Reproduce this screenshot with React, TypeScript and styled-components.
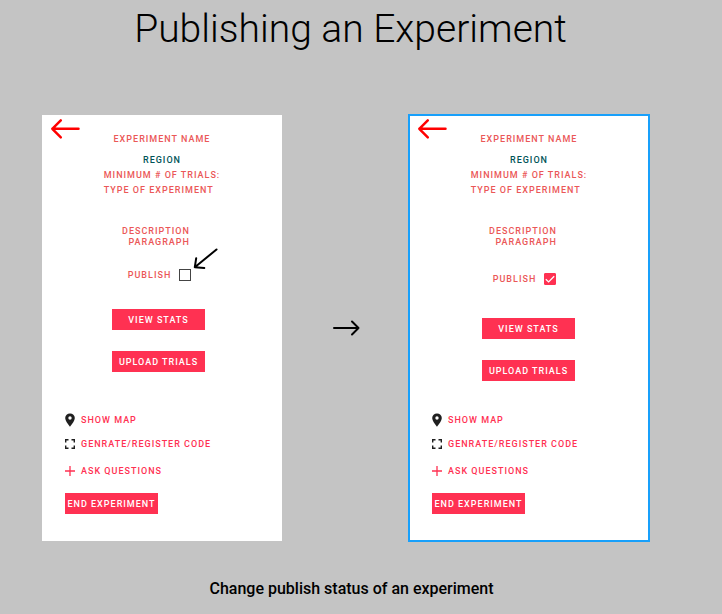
import { useState } from "react";
import type { ReactNode } from "react";
import styled, { createGlobalStyle } from "styled-components";

const color = {
  page: "#c4c4c4",
  primary: "#ff3152",
  coral: "#eb5757",
  teal: "#005457",
  back: "#ff0000",
  select: "#18a0fb",
};

const GlobalStyle = createGlobalStyle`
  * { box-sizing: border-box; }
  body {
    margin: 0;
    background: ${color.page};
    color: #000;
    font-family: Roboto, "Liberation Sans", sans-serif;
  }
`;

const Page = styled.main`
  display: flex;
  flex-direction: column;
  min-height: 100vh;
`;

const Title = styled.h1`
  margin: 0;
  padding-top: 6px;
  padding-right: 21px;
  text-align: center;
  font-size: 39px;
  font-weight: 300;
  line-height: 47px;
`;

const Flow = styled.section`
  display: grid;
  grid-template-columns: 1fr 127px 1fr;
  padding: 62px 73px 0 42px;
`;

const Between = styled.div`
  display: grid;
  place-items: center;
  padding-left: 1px;
`;

const Caption = styled.p`
  margin: 0;
  padding-top: 38px;
  padding-right: 19px;
  text-align: center;
  font-size: 16px;
  font-weight: 500;
  line-height: 19px;
`;

const Screen = styled.article<{ $selected: boolean }>`
  display: flex;
  flex-direction: column;
  min-height: 426px;
  padding: 3px 0 27px;
  background: #fff;
  box-shadow: ${(p) =>
    p.$selected ? `0 0 0 1px ${color.select}, inset 0 0 0 1px ${color.select}` : "none"};
  font-size: 9px;
  font-weight: 500;
  line-height: 11px;
  letter-spacing: 1px;
  text-transform: uppercase;
`;

const Header = styled.header`
  display: grid;
  grid-template-columns: 30px 1fr 30px;
  padding: 0 8px;
`;

const BackButton = styled.button`
  display: block;
  height: 22px;
  padding: 0;
  border: 0;
  background: none;
  cursor: pointer;
`;

const Name = styled.h2`
  margin: 0;
  padding-top: 16px;
  color: ${color.coral};
  font-size: inherit;
  font-weight: 500;
  text-align: center;
`;

const Details = styled.div`
  align-self: center;
  padding-top: 8px;
  color: ${color.coral};
  line-height: 15px;
`;

const Region = styled.p`
  margin: 0;
  color: ${color.teal};
  text-align: center;
`;

const Detail = styled.p`
  margin: 0;
`;

const Description = styled.p`
  align-self: center;
  margin: 28px 12px 0 0;
  color: ${color.coral};
  text-align: right;
`;

const PublishRow = styled.label<{ $checked: boolean }>`
  display: flex;
  align-self: center;
  align-items: center;
  gap: 8px;
  margin-top: ${(p) => (p.$checked ? 25 : 21)}px;
  margin-right: ${(p) => (p.$checked ? 9 : 5)}px;
  color: ${color.coral};
`;

const BoxCell = styled.span`
  position: relative;
  display: grid;
`;

const Box = styled.input`
  grid-area: 1 / 1;
  appearance: none;
  width: 12px;
  height: 12px;
  margin: 0;
  border: 1px solid #444;
  background: #fff;
  cursor: pointer;
  &:checked {
    border-color: ${color.primary};
    border-radius: 1px;
    background: ${color.primary};
  }
`;

const Tick = styled.svg`
  grid-area: 1 / 1;
  pointer-events: none;
`;

const Pointer = styled.svg`
  position: absolute;
  left: 14px;
  bottom: 12px;
  pointer-events: none;
`;

const Button = styled.button`
  width: 93px;
  height: 21px;
  padding: 1px 0 0;
  border: 0;
  background: ${color.primary};
  color: #fff;
  font: inherit;
  letter-spacing: inherit;
  text-transform: inherit;
  white-space: nowrap;
  cursor: pointer;
`;

const Actions = styled.div<{ $checked: boolean }>`
  display: grid;
  gap: 21px;
  align-self: center;
  margin-top: ${(p) => (p.$checked ? 33 : 28)}px;
  margin-right: ${(p) => (p.$checked ? 1 : 7)}px;
`;

const Footer = styled.div`
  display: flex;
  flex-direction: column;
  align-items: flex-start;
  margin-top: auto;
  padding-left: 23px;
`;

const Menu = styled.ul`
  display: grid;
  gap: 10px;
  margin: 0 0 15px;
  padding: 0;
  list-style: none;
`;

const MenuItem = styled.li<{ $apart?: boolean }>`
  margin-top: ${(p) => (p.$apart ? 3 : 0)}px;
`;

const MenuLink = styled.a`
  display: flex;
  align-items: center;
  gap: 6px;
  height: 14px;
  color: ${color.primary};
  text-decoration: none;
`;

function PinIcon() {
  return (
    <svg width="10" height="14" viewBox="1 0 10 14" aria-hidden="true">
      <path
        fill="#1f1f1f"
        fillRule="evenodd"
        d="M6 .4A4.700 4.700 0 0 0 1.200 5.100C1.200 8.600 6 13.700 6 13.700s4.800-5.100 4.800-8.600A4.700 4.700 0 0 0 6 .4Zm0 6.300a1.700 1.700 0 1 1 0-3.400 1.700 1.700 0 0 1 0 3.400Z"
      />
    </svg>
  );
}

function FrameIcon() {
  return (
    <svg width="10" height="14" viewBox="1 0 10 14" aria-hidden="true">
      <path
        fill="none"
        stroke="#1f1f1f"
        strokeWidth="1.400"
        d="M1.700 5.500V2.700h2.800M7.500 2.700h2.800v2.800M10.300 8.500v2.800H7.500M4.500 11.300H1.700V8.500"
      />
    </svg>
  );
}

function PlusIcon() {
  return (
    <svg width="10" height="14" viewBox="1 0 10 14" aria-hidden="true">
      <path fill="none" stroke={color.primary} strokeWidth="1.300" d="M1 7h10M6 2v10" />
    </svg>
  );
}

type ScreenProps = {
  published: boolean;
  selected?: boolean;
  hint?: ReactNode;
};

function ExperimentScreen({ published, selected = false, hint }: ScreenProps) {
  const [checked, setChecked] = useState(published);
  return (
    <Screen $selected={selected}>
      <Header>
        <BackButton type="button" aria-label="Back">
          <svg width="30" height="22" viewBox="0 0 30 22" aria-hidden="true">
            <path
              fill="none"
              stroke={color.back}
              strokeWidth="2.500"
              strokeLinecap="round"
              strokeLinejoin="round"
              d="M28.500 10.800H2.300M10.800 2.300L2.300 10.800l8.500 8.500"
            />
          </svg>
        </BackButton>
        <Name>Experiment name</Name>
      </Header>
      <Details>
        <Region>Region</Region>
        <Detail>Minimum # of trials:</Detail>
        <Detail>Type of experiment</Detail>
      </Details>
      <Description>
        Description
        <br />
        Paragraph
      </Description>
      <PublishRow $checked={published}>
        Publish
        <BoxCell>
          <Box
            type="checkbox"
            checked={checked}
            onChange={(e) => setChecked(e.target.checked)}
          />
          {checked && (
            <Tick width="12" height="12" viewBox="0 0 12 12" aria-hidden="true">
              <path fill="none" stroke="#fff" strokeWidth="1.300" d="M1.800 6.200l2.800 2.700 5.600-5.700" />
            </Tick>
          )}
          {hint}
        </BoxCell>
      </PublishRow>
      <Actions $checked={published}>
        <Button type="button">View stats</Button>
        <Button type="button">Upload trials</Button>
      </Actions>
      <Footer>
        <Menu>
          <MenuItem>
            <MenuLink href="#map">
              <PinIcon />
              Show map
            </MenuLink>
          </MenuItem>
          <MenuItem>
            <MenuLink href="#code">
              <FrameIcon />
              Genrate/register code
            </MenuLink>
          </MenuItem>
          <MenuItem $apart>
            <MenuLink href="#questions">
              <PlusIcon />
              Ask questions
            </MenuLink>
          </MenuItem>
        </Menu>
        <Button type="button">End experiment</Button>
      </Footer>
    </Screen>
  );
}

export default function App() {
  return (
    <Page>
      <GlobalStyle />
      <Title>Publishing an Experiment</Title>
      <Flow>
        <ExperimentScreen
          published={false}
          hint={
            <Pointer width="26" height="22" viewBox="0 0 26 22" aria-hidden="true">
              <path
                fill="none"
                stroke="#000"
                strokeWidth="2"
                strokeLinecap="round"
                strokeLinejoin="round"
                d="M23.500 2.500L1.800 20.200M3.200 11.200L1.800 20.200l9.500.8"
              />
            </Pointer>
          }
        />
        <Between>
          <svg width="28" height="16" viewBox="0 0 28 16" aria-hidden="true">
            <path
              fill="none"
              stroke="#000"
              strokeWidth="2"
              strokeLinecap="round"
              strokeLinejoin="round"
              d="M2 8h24.500M20 1.500L26.500 8 20 14.500"
            />
          </svg>
        </Between>
        <ExperimentScreen published selected />
      </Flow>
      <Caption>Change publish status of an experiment</Caption>
    </Page>
  );
}
